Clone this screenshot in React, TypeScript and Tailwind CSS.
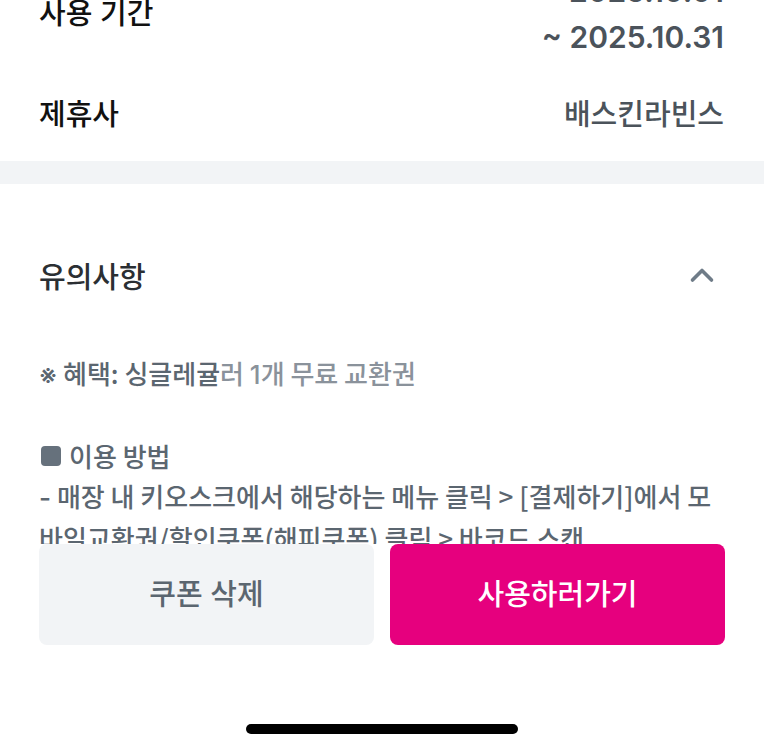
export default function App() {
  return (
    <div className="flex h-screen flex-col overflow-hidden bg-white font-['Inter','Noto_Sans_CJK_KR',sans-serif] font-medium text-[#5b6670]">
      <main className="min-h-0 flex-1 overflow-hidden">
        <dl className="-mt-8 pr-10 pb-[23px] pl-[39px] text-[29px] leading-[46px] text-[#4b535b]">
          <div className="flex items-center justify-between">
            <dt className="text-[#111]">사용 기간</dt>
            <dd className="text-right text-[30px] font-semibold">2025.10.01<br />~ 2025.10.31</dd>
          </div>
          <div className="mt-8 flex justify-between">
            <dt className="text-[#111]">제휴사</dt>
            <dd>배스킨라빈스</dd>
          </div>
        </dl>
        <hr className="h-[23px] border-0 bg-[#f2f4f6]" />
        <section className="px-[39px] pt-[71px]">
          <button className="flex w-full items-center justify-between pr-2 text-[29px] leading-[46px] text-[#2b2f33]">
            유의사항
            <svg aria-hidden="true" width="30" height="30" viewBox="0 0 30 30" fill="none" stroke="#6f7c88" strokeWidth="3.6" strokeLinecap="round" strokeLinejoin="round"><path d="m5.5 17 9.5-9.5 9.5 9.5" /></svg>
          </button>
          <div className="mt-[52px] font-['Noto_Sans_CJK_KR',sans-serif] text-[26px] leading-10">
            <p><span className="font-['Inter','Noto_Sans_CJK_KR']">※</span> 혜택: 싱글레귤<span className="text-[#8a929b]">러 <span className="font-['Inter']">1</span>개 무료 교환권</span></p>
            <p className="mt-[41px] flex items-center gap-2"><span className="ml-0.5 size-5 rounded bg-[#66717c]" />이용 방법</p>
            <p><span className="font-['Inter']">-</span> 매장 내 키오스크에서 해당하는 메뉴 클릭 &gt; [결제하기]에서 모바일교환권/할인쿠폰(해피쿠폰) 클릭 &gt; 바코드 스캔</p>
          </div>
        </section>
      </main>
      <footer className="bg-white px-[39px]">
        <div className="grid grid-cols-2 gap-4 text-[29px]">
          <button className="h-[101px] rounded-lg bg-[#f2f4f6]">쿠폰 삭제</button>
          <button className="h-[101px] rounded-lg bg-[#e6007e] text-white">사용하러가기</button>
        </div>
        <div className="mx-auto mt-[79px] mb-4 h-[10px] w-[272px] rounded-full bg-black" />
      </footer>
    </div>
  );
}
